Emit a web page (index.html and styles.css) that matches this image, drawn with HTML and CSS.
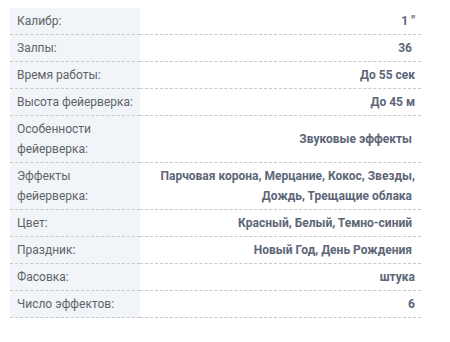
FILE: index.html
```html
<!DOCTYPE html>
<html lang="ru">
<head>
<meta charset="utf-8">
<link rel="stylesheet" href="styles.css">
</head>
<body>
<table class="specs">
  <colgroup><col class="col-label"><col class="col-value"></colgroup>
  <tr><td class="label">Калибр:</td><td class="value">1 "</td></tr>
  <tr><td class="label">Залпы:</td><td class="value">36&nbsp;</td></tr>
  <tr><td class="label">Время работы:</td><td class="value">До 55 сек</td></tr>
  <tr><td class="label">Высота фейерверка:</td><td class="value">До 45 м</td></tr>
  <tr><td class="label">Особенности фейерверка:</td><td class="value">Звуковые эффекты&nbsp;</td></tr>
  <tr><td class="label">Эффекты фейерверка:</td><td class="value">Парчовая корона, Мерцание, Кокос, Звезды, Дождь, Трещащие облака&nbsp;</td></tr>
  <tr><td class="label">Цвет:</td><td class="value">Красный, Белый, Темно-синий&nbsp;</td></tr>
  <tr><td class="label">Праздник:</td><td class="value">Новый Год, День Рождения&nbsp;</td></tr>
  <tr><td class="label">Фасовка:</td><td class="value">штука</td></tr>
  <tr><td class="label">Число эффектов:</td><td class="value">6</td></tr>
</table>
</body>
</html>
```
FILE: styles.css
```css
html, body {
  margin: 0;
  background: #ffffff;
}
body {
  padding: 8px 0 0 10px;
  font-family: Roboto, "Liberation Sans", sans-serif;
  font-size: 12px;
}
.specs {
  width: 411px;
  table-layout: fixed;
  border-collapse: collapse;
  border-spacing: 0;
}
.col-label {
  width: 130px;
}
.specs td {
  padding: 3px 6px 3px 7px;
  line-height: 20px;
  border-bottom: 1px dashed #c8c8c8;
  vertical-align: middle;
}
.label {
  padding-right: 0;
  background: #f1f4f8;
  color: #5f6368;
}
.value {
  text-align: right;
  font-weight: 700;
  color: #5d6677;
}
```
